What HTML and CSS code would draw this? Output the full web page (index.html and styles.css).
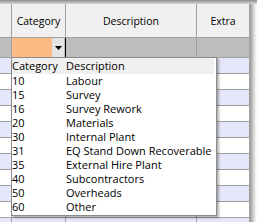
FILE: index.html
```html
<!DOCTYPE html>
<html lang="en">

<head>
    <meta charset="UTF-8">
    <meta name="viewport" content="width=device-width, initial-scale=1.0">
    <title>Category lookup</title>
    <link rel="stylesheet" href="styles.css">
</head>

<body>
    <div class="marco">
        <div class="sombraArriba"></div>
        <div class="cuerpo">
            <div class="grilla">
                <div class="cab"></div>
                <div class="cab">Category</div>
                <div class="cab">Description</div>
                <div class="cab">Extra</div>

                <div class="filtro"></div>
                <div class="filtro filtroCat">
                    <span class="editor"></span>
                    <span class="botonLista">
                        <svg width="7" height="4" viewBox="0 0 7 4"><path d="M0 0H7L3.5 4Z" fill="#000" /></svg>
                    </span>
                </div>
                <div class="filtro"></div>
                <div class="filtro"></div>

                <div class="fila par"></div><div class="fila par"></div><div class="fila par"></div><div class="fila par"></div>
                <div class="fila"></div><div class="fila"></div><div class="fila"></div><div class="fila"></div>
                <div class="fila par"></div><div class="fila par"></div><div class="fila par"></div><div class="fila par"></div>
                <div class="fila"></div><div class="fila"></div><div class="fila"></div><div class="fila"></div>
                <div class="fila par"></div><div class="fila par"></div><div class="fila par"></div><div class="fila par"></div>
                <div class="fila"></div><div class="fila"></div><div class="fila"></div><div class="fila"></div>
                <div class="fila par"></div><div class="fila par"></div><div class="fila par"></div><div class="fila par"></div>
                <div class="fila"></div><div class="fila"></div><div class="fila"></div><div class="fila"></div>
                <div class="fila par"></div><div class="fila par"></div><div class="fila par"></div><div class="fila par"></div>
                <div class="fila"></div><div class="fila"></div><div class="fila"></div><div class="fila"></div>
                <div class="fila par"></div><div class="fila par"></div><div class="fila par"></div><div class="fila par"></div>
            </div>
            <div class="sombraLado"></div>
        </div>

        <div class="lista">
            <div class="listaCab">
                <span class="colCod">Category</span>
                <span>Description</span>
            </div>
            <div class="item"><span class="colCod">10</span><span>Labour</span></div>
            <div class="item"><span class="colCod">15</span><span>Survey</span></div>
            <div class="item"><span class="colCod">16</span><span>Survey Rework</span></div>
            <div class="item"><span class="colCod">20</span><span>Materials</span></div>
            <div class="item"><span class="colCod">30</span><span>Internal Plant</span></div>
            <div class="item"><span class="colCod">31</span><span>EQ Stand Down Recoverable</span></div>
            <div class="item"><span class="colCod">35</span><span>External Hire Plant</span></div>
            <div class="item"><span class="colCod">40</span><span>Subcontractors</span></div>
            <div class="item"><span class="colCod">50</span><span>Overheads</span></div>
            <div class="item"><span class="colCod">60</span><span>Other</span></div>
        </div>
    </div>
</body>

</html>
```

FILE: styles.css
```css
body {
    margin: 0;
    background: #fff;
    font-family: 'Open Sans', sans-serif;
    color: #000;
}

.marco {
    position: relative;
    width: 257px;
    height: 222px;
    overflow: hidden;
}

.sombraArriba {
    height: 4px;
    background: linear-gradient(#8c8c8c, #d8d8d8);
}

.cuerpo {
    display: flex;
}

.grilla {
    width: 250px;
    display: grid;
    grid-template-columns: 12px 54px 131px 53px;
    grid-template-rows: 34px 20px;
    grid-auto-rows: 16px;
}

.sombraLado {
    width: 7px;
    background: linear-gradient(to right, #9a9a9a, #e8e8e8 70%, #fff);
}

.grilla > div {
    box-sizing: border-box;
    border-right: 1px solid #a0a0a0;
    border-bottom: 1px solid #a0a0a0;
}

.cab {
    background: #f0f0f0;
    font-size: 10.5px;
    display: flex;
    align-items: center;
    justify-content: center;
}

.filtro {
    background: #bdbdbd;
}

.filtroCat {
    display: flex;
    border-right: 1px solid #000 !important;
}

.editor {
    width: 40px;
    background: #fbbb83;
}

.botonLista {
    width: 12px;
    background: #e3e3e3;
    display: flex;
    align-items: center;
    justify-content: center;
}

.fila {
    background: #fff;
}

.fila.par {
    background: #e6e6fa;
}

.lista {
    position: absolute;
    left: 11px;
    top: 57px;
    width: 206px;
    height: 159px;
    box-sizing: border-box;
    background: #fff;
    border: 1px solid #8a8a8a;
    box-shadow: 2px 2px 2px rgba(0, 0, 0, 0.3);
    font-size: 11px;
    white-space: nowrap;
}

.listaCab {
    display: flex;
    height: 16px;
    line-height: 16px;
    background: #f0f0f0;
    margin-right: 2px;
}

.item {
    display: flex;
    height: 14px;
    line-height: 14px;
}

.colCod {
    width: 54px;
    flex: none;
}
```
